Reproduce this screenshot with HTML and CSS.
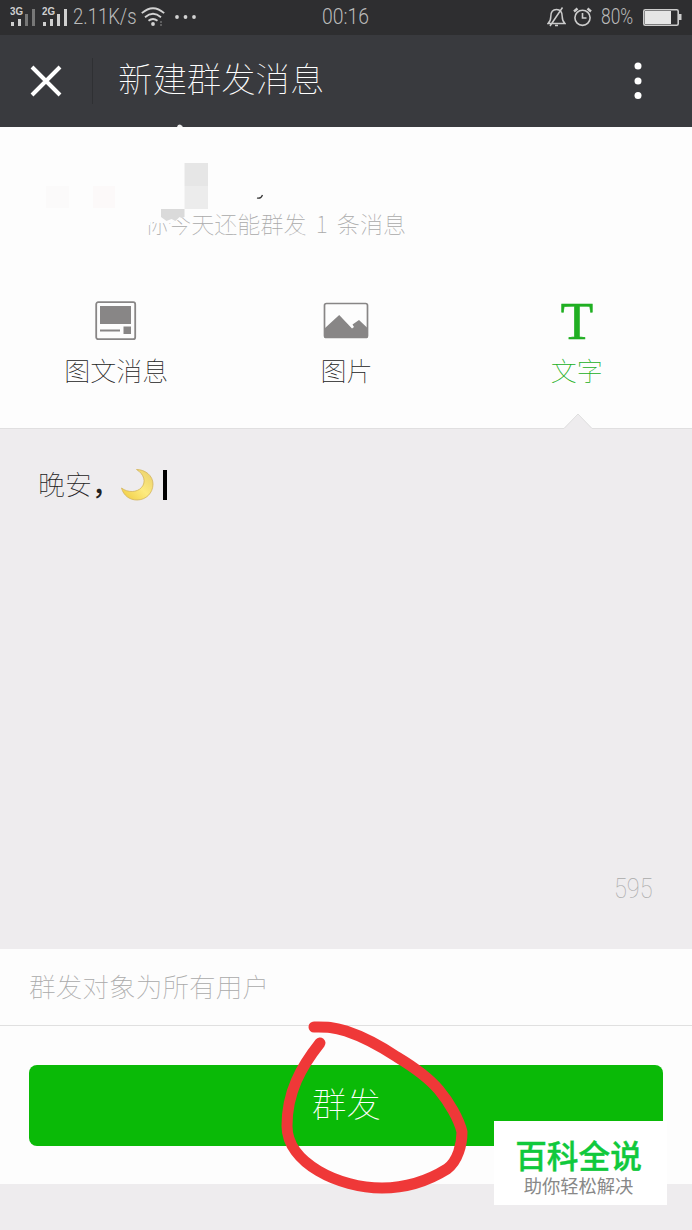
FILE: index.html
```html
<!DOCTYPE html>
<html lang="zh-CN">
<head>
    <meta charset="utf-8">
    <meta name="viewport" content="width=device-width, initial-scale=1">
    <title>新建群发消息</title>
    <link rel="stylesheet" href="styles.css">
</head>

<body>
<main>
    <div class="status">
        <div class="status-left">
            <svg class="signal" width="58" height="22" viewBox="0 0 58 22">
                <g class="net"><text x="0" y="9" textLength="13" lengthAdjust="spacingAndGlyphs">3G</text><text x="32" y="9" textLength="13" lengthAdjust="spacingAndGlyphs">2G</text></g>
                <path d="M1 16h3v4h-3zM8 13h3v7h-3zM33 16h3v4h-3zM40 13h3v7h-3zM47 8h3v12h-3zM54 3h3v17h-3z" fill="#d0d0d0"/>
                <path d="M15 8h3v12h-3zM22 3h3v17h-3z" fill="#777"/>
            </svg>
            <span class="speed"><b>2.11K/s</b></span>
            <svg class="wifi" width="24" height="20" viewBox="0 0 24 20" fill="none" stroke="#d2d2d2" stroke-width="1.8">
                <path d="M.8 6.2Q12-3.8 23.2 6.2M4 10.2Q12 3.4 20 10.2M7.5 13.8Q12 10.2 16.5 13.8"/>
                <circle cx="12" cy="17" r="1.9" fill="#d2d2d2" stroke="none"/>
                <path d="M20 14.5v1M20 17.5v1" stroke="#999"/>
            </svg>
            <svg class="more" width="22" height="4" viewBox="0 0 22 4" fill="#d2d2d2">
                <circle cx="2" cy="2" r="1.9"/><circle cx="10.500" cy="2" r="1.9"/><circle cx="19" cy="2" r="1.9"/>
            </svg>
        </div>
        <span class="time"><b>00:16</b></span>
        <div class="status-right">
            <svg width="19" height="20" viewBox="0 0 19 20" fill="none" stroke="#ccc" stroke-width="1.5">
                <path d="M1 16.5Q3.8 14 3.8 9.5Q3.8 2.5 9.5 2.5Q15.2 2.5 15.2 9.5Q15.2 14 18 16.5ZM8 18.5h3M3 19L15.5.5"/>
            </svg>
            <svg class="alarm" width="19" height="20" viewBox="0 0 19 20" fill="none" stroke="#ccc" stroke-width="1.6">
                <circle cx="9.5" cy="10.8" r="7.6"/><path d="M9.5 6v5h4"/><path d="M1 4.500L4.500 1.500M18 4.500L14.500 1.500" stroke-width="2.4"/>
            </svg>
            <span class="percent"><b>80%</b></span>
            <svg class="battery" width="39" height="17" viewBox="0 0 39 17">
                <rect x=".8" y=".8" width="34.4" height="15.4" rx="1.5" fill="none" stroke="#ccc" stroke-width="1.6"/>
                <path d="M2 2h26v13H2z" fill="#e6e6e6"/><path d="M36 5h2.500v6H36z" fill="#ccc"/>
            </svg>
        </div>
    </div>

    <header>
        <svg class="close" width="32" height="32" viewBox="0 0 32 32" stroke="#fff" stroke-width="4"><path d="M2 2L30 30M30 2L2 30"/></svg>
        <h1>新建群发消息</h1>
        <svg class="menu" width="8" height="38" viewBox="0 0 8 38" fill="#fff">
            <circle cx="4" cy="4" r="3.5"/><circle cx="4" cy="19" r="3.5"/><circle cx="4" cy="33.5" r="3.5"/>
        </svg>
    </header>

    <section class="account">
        <p>你今天还能群发 1 条消息</p>
        <!-- 打码区域 -->
        <svg class="mosaic" width="300" height="125" viewBox="0 0 300 125">
            <path d="M140 80h44v17l-7 1-5 5h-12l-4-1h-6v3h-10z" fill="#fdfdfd"/>
            <path d="M46 66h23v22H46z" fill="#fbfafa"/>
            <path d="M93 66h22v22H93z" fill="#fcf9f9"/>
            <path d="M184.500 43H208v23h-23.500z" fill="#e6e6e6"/>
            <path d="M184.500 66H208v23h-23.500z" fill="#ececec"/>
            <path d="M161 89h23.500v8l-3 1-2-1-4 4-4-2-5 2-5.500-4z" fill="#dadada"/>
            <path d="M257 78q4 1 5.500-3" fill="none" stroke="#333" stroke-width="1.2"/>
            <path d="M177 7l1-2 2-.5 2.500 1.500v1z" fill="#eee"/>
        </svg>
    </section>

    <nav>
        <div class="tab">
            <svg width="42" height="40" viewBox="0 0 42 40">
                <rect x="1.2" y="1.2" width="39" height="37" rx="2" fill="none" stroke="#888686" stroke-width="1.8"/>
                <path d="M5 5h31v18H5zM28.5 25.5H36V33h-7.5zM5 28.5h20v2H5z" fill="#888686"/>
            </svg>
            <span>图文消息</span>
        </div>
        <div class="tab">
            <svg width="46" height="40" viewBox="0 0 46 40">
                <rect x="1.5" y="2.5" width="43" height="34" rx="2" fill="none" stroke="#888686" stroke-width="1.7"/>
                <path d="M1.500 27.500L16.200 14L29 27.500L31 26L29.500 23.500L36 19L44.500 27V37h-43z" fill="#888686"/>
            </svg>
            <span>图片</span>
        </div>
        <div class="tab active">
            <i>T</i>
            <span>文字</span>
        </div>
        <svg class="arrow" width="32" height="17" viewBox="0 0 32 17"><path d="M0 17V15.5L2 15L16 1.5L30 15L32 15.5V17z" fill="#eeecee"/><path d="M0 15.5H2L16 1L30 15.5H32" fill="none" stroke="#dfdfdf"/></svg>
    </nav>

    <div class="editor">
        <div class="content"><span class="words">晚安<b>，</b></span><svg width="34" height="34" viewBox="0 0 34 34">
                <defs><linearGradient id="moon" x1="1" y1="0" x2="0" y2="1"><stop offset="0" stop-color="#e8cc68"/><stop offset=".5" stop-color="#fdeb80"/><stop offset="1" stop-color="#efc93c"/></linearGradient></defs>
                <path d="M16.500 1.500C25 1.500 33 7.500 33 16C33 25 26 32 17 32C9.500 32 3.500 27.500 1.500 20C8 25 17 24.500 21.500 19.500C26.500 14 24 6 16.500 1.500Z" fill="url(#moon)" stroke="#d3b45c" stroke-width=".8"/>
            </svg><span class="caret"></span></div>
        <div class="count"><b>595</b></div>
    </div>

    <div class="target">群发对象为所有用户</div>

    <div class="submit">
        <button class="btn">群发</button>
        <svg class="circle" width="200" height="180" viewBox="0 0 200 180">
            <path d="M39 23C20 47 6 72 6 106C6 143 58 168 101 168C130 168 150 159 166 149C177 141 181 124 181 112C178 99 168 82 158 70C147 57 131 46 116 37C98 25 80 16 65 11C51 6.500 44 7 33 7" fill="none" stroke="#ef3838" stroke-width="11" stroke-linecap="round" stroke-linejoin="round"/>
        </svg>
    </div>

    <div class="logo">
        <strong>百科全说</strong>
        <span>助你轻松解决</span>
    </div>
</main>
</body>
</html>
```

FILE: styles.css
```css
* {
    margin: 0;
    padding: 0;
    box-sizing: border-box;
}

body {
    background: #eeecee;
    color: #222;
    font: 100 26px "Noto Sans CJK SC", sans-serif;
}

main {
    position: relative;
    width: 692px;
    height: 1230px;
    overflow: hidden;
}

svg {
    display: block;
    flex: none;
}

.status {
    display: grid;
    grid-template-columns: 1fr 50px 1fr;
    align-items: center;
    height: 35px;
    padding: 0 10px 1px;
    background: #2e2e30;
    color: #bbb;
}

.status-left, .status-right {
    display: flex;
    align-items: center;
}

.status-right {
    justify-content: flex-end;
}

.net {
    font: bold 10px "Liberation Sans", sans-serif;
    fill: #d0d0d0;
}

.speed, .time, .percent, .count {
    font-family: Roboto, sans-serif;
    font-size: 22px;
    line-height: 32px;
    white-space: nowrap;
}

/* 窄体数字 */
.speed b, .time b, .percent b, .count b {
    display: inline-block;
    font-weight: 300;
    transform: scaleX(.84);
    transform-origin: left;
}

.speed {
    width: 73px;
    padding-left: 5px;
}

.more {
    margin-left: 10px;
}

.time {
    width: 50px;
    padding-left: 1px;
}

.time b {
    transform: scaleX(.88);
}

.alarm {
    margin: 0 9px 0 7px;
}

.percent {
    width: 34px;
}

.percent b {
    transform: scaleX(.79);
}

.battery {
    margin: 0 0 0 8px;
}

header {
    display: flex;
    align-items: center;
    height: 92px;
    padding: 0 50px 0 30px;
    background: #393a3e;
    color: #fff;
}

header h1 {
    flex: 1;
    height: 46px;
    margin-left: 30px;
    padding-left: 25px;
    border-left: 1px solid #2f3033;
    font-size: 34.4px;
    font-weight: 100;
    line-height: 39px;
}

.account {
    position: relative;
    height: 153px;
    padding: 79px 0 0 145px;
    background: #fdfdfd;
    color: #aaa;
    font-size: 23.1px;
    line-height: 34px;
    word-spacing: 4px;
}

.mosaic {
    position: absolute;
    top: -7px;
    left: 0;
}

nav {
    position: relative;
    display: grid;
    grid-template-columns: repeat(3, 1fr);
    height: 149px;
    padding: 21px 0 0 1px;
    background: #fdfdfd;
    border-bottom: 1px solid #e0dfe0;
}

.tab {
    display: flex;
    flex-direction: column;
    align-items: center;
    line-height: 38px;
}

.tab svg, .tab i {
    height: 40px;
    margin-bottom: 10px;
}

.tab i {
    font: 53px/40px "Liberation Serif", serif;
    -webkit-text-stroke: .6px #20af22;
}

.active {
    color: #20af22;
}

.arrow {
    position: absolute;
    left: 562px;
    bottom: -2px;
}

.editor {
    display: flex;
    flex-direction: column;
    justify-content: space-between;
    height: 520px;
    padding: 36px 38px 44px;
}

.content {
    display: flex;
    align-items: center;
    height: 40px;
    font-size: 27px;
}

.words {
    width: 82px;
    padding-bottom: 3px;
    white-space: nowrap;
}

.words b {
    font-weight: 500;
}

.caret {
    width: 4px;
    height: 30px;
    margin-left: 9px;
    background: #000;
}

.count {
    align-self: flex-end;
    width: 40px;
    color: #aaa;
    font-size: 28px;
}

.count b {
    font-weight: 100;
}

.target {
    height: 77px;
    padding-left: 29px;
    background: #fdfdfd;
    border-bottom: 1px solid #e0e0e0;
    color: #aaa;
    font-size: 26.7px;
    line-height: 73px;
}

.submit {
    position: relative;
    height: 158px;
    padding: 39px 29px 0;
    background: #fdfdfd;
}

.btn {
    display: block;
    width: 634px;
    height: 81px;
    padding: 0 0 8px 1px;
    border: 0;
    border-radius: 8px;
    background: #0aba07;
    color: #fff;
    font: 100 34.4px "Noto Sans CJK SC", sans-serif;
}

.circle {
    position: absolute;
    top: -6px;
    left: 281px;
}

.logo {
    position: absolute;
    top: 1121px;
    left: 494px;
    display: flex;
    flex-direction: column;
    align-items: center;
    width: 173px;
    height: 84px;
    padding: 15px 4px 0 0;
    background: #fff;
}

.logo strong {
    color: #10c93c;
    font-size: 31.7px;
    font-weight: 500;
    line-height: 36px;
    -webkit-text-stroke: .4px #10c93c;
}

.logo span {
    color: #888;
    font-size: 18.3px;
    font-weight: 400;
    line-height: 26px;
}
```
